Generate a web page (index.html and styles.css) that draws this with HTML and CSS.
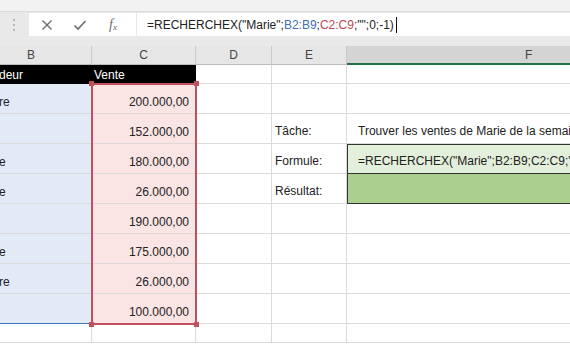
FILE: index.html
```html
<!DOCTYPE html>
<html lang="fr">
<head>
<meta charset="UTF-8">
<title>RECHERCHEX</title>
<link rel="stylesheet" href="styles.css">
</head>
<body>

<div class="edge"></div>

<div class="formula-bar">
  <div class="grip">
    <svg width="4" height="14" viewBox="0 0 4 14"><circle cx="2" cy="2" r="1" fill="#a6a6a6"/><circle cx="2" cy="7" r="1" fill="#a6a6a6"/><circle cx="2" cy="12" r="1" fill="#a6a6a6"/></svg>
  </div>
  <div class="buttons">
    <svg class="btn" width="12" height="12" viewBox="0 0 12 12"><path d="M1.5 1.5 L10.5 10.5 M10.5 1.5 L1.5 10.5" stroke="#6b6b6b" stroke-width="1.4" fill="none"/></svg>
    <svg class="btn" width="14" height="12" viewBox="0 0 14 12"><path d="M1.5 6.5 L5 10 L12.5 2" stroke="#6b6b6b" stroke-width="1.6" fill="none"/></svg>
    <span class="fx">f<sub>x</sub></span>
  </div>
  <div class="input">=RECHERCHEX("Marie";<span class="ref-b">B2:B9</span>;<span class="ref-c">C2:C9</span>;"";0;-1)<span class="caret"></span></div>
</div>

<div class="sheet">
  <!-- column headers -->
  <div class="col-head">B</div>
  <div class="col-head">C</div>
  <div class="col-head">D</div>
  <div class="col-head">E</div>
  <div class="col-head active">F</div>

  <!-- row 1 -->
  <div class="cell head-black cut">deur</div>
  <div class="cell head-black">Vente</div>
  <div class="cell"></div>
  <div class="cell"></div>
  <div class="cell"></div>

  <!-- row 2 -->
  <div class="cell b cut">re</div>
  <div class="cell c num">200.000,00</div>
  <div class="cell"></div>
  <div class="cell"></div>
  <div class="cell"></div>

  <!-- row 3 -->
  <div class="cell b cut"></div>
  <div class="cell c num">152.000,00</div>
  <div class="cell"></div>
  <div class="cell label">Tâche:</div>
  <div class="cell label task">Trouver les ventes de Marie de la semaine</div>

  <!-- row 4 -->
  <div class="cell b cut">e</div>
  <div class="cell c num">180.000,00</div>
  <div class="cell"></div>
  <div class="cell label">Formule:</div>
  <div class="cell label formula">=RECHERCHEX("Marie";B2:B9;C2:C9;"";0;-1)</div>

  <!-- row 5 -->
  <div class="cell b cut">e</div>
  <div class="cell c num">26.000,00</div>
  <div class="cell"></div>
  <div class="cell label">Résultat:</div>
  <div class="cell label result"></div>

  <!-- row 6 -->
  <div class="cell b cut"></div>
  <div class="cell c num">190.000,00</div>
  <div class="cell"></div>
  <div class="cell"></div>
  <div class="cell"></div>

  <!-- row 7 -->
  <div class="cell b cut">e</div>
  <div class="cell c num">175.000,00</div>
  <div class="cell"></div>
  <div class="cell"></div>
  <div class="cell"></div>

  <!-- row 8 -->
  <div class="cell b cut">re</div>
  <div class="cell c num">26.000,00</div>
  <div class="cell"></div>
  <div class="cell"></div>
  <div class="cell"></div>

  <!-- row 9 -->
  <div class="cell b last cut"></div>
  <div class="cell c num">100.000,00</div>
  <div class="cell"></div>
  <div class="cell"></div>
  <div class="cell"></div>

  <!-- row 10 -->
  <div class="cell"></div>
  <div class="cell"></div>
  <div class="cell"></div>
  <div class="cell"></div>
  <div class="cell"></div>

  <!-- outline of C2:C9 used by the formula -->
  <div class="range-c">
    <span class="handle tl"></span>
    <span class="handle tr"></span>
    <span class="handle bl"></span>
    <span class="handle br"></span>
  </div>
</div>

</body>
</html>
```

FILE: styles.css
```css
body {
  margin: 0;
  width: 570px;
  height: 350px;
  overflow: hidden;
  background: #ffffff;
  font-family: "Liberation Sans", Arial, sans-serif;
  font-size: 12px;
  color: #222;
}

.edge {
  height: 11px;
  background: #f2f2f2;
  border-bottom: 1px solid #dcdcdc;
}

.formula-bar {
  display: flex;
  align-items: flex-start;
  height: 34px;
  padding-top: 1px;
  box-sizing: border-box;
  background: #e9e9e9;
}
.grip {
  width: 29px;
  display: flex;
  justify-content: center;
  padding-top: 5px;
  box-sizing: border-box;
  padding-right: 1px;
}
.buttons {
  width: 107px;
  height: 23px;
  background: #fff;
  display: flex;
  align-items: center;
  box-sizing: border-box;
  padding-left: 12px;
}
.buttons .btn {
  margin-right: 20px;
}
.buttons .btn + .btn {
  margin-right: 22px;
}
.fx {
  font-family: "Liberation Serif", serif;
  font-style: italic;
  font-size: 14px;
  color: #6b6b6b;
  line-height: 1;
}
.fx sub {
  font-size: 9px;
  vertical-align: -1px;
}
.input {
  flex: 1;
  height: 23px;
  margin-left: 1px;
  background: #fff;
  padding-left: 10px;
  display: flex;
  align-items: center;
  white-space: nowrap;
  font-size: 12px;
  color: #222;
}
.ref-b { color: #3f6fb5; }
.ref-c { color: #c0474f; }
.caret {
  display: inline-block;
  width: 1px;
  height: 16px;
  background: #111;
  margin-left: 2px;
}

.sheet {
  position: relative;
  display: grid;
  grid-template-columns: 92px 104px 76px 75px 240px;
  grid-template-rows: 19px 19px repeat(8, 30px) 19px;
}

.col-head {
  background: #e6e6e6;
  border-right: 1px solid #c9c9c9;
  border-bottom: 1px solid #bdbdbd;
  box-sizing: border-box;
  display: flex;
  align-items: center;
  justify-content: center;
  color: #444;
  font-size: 12px;
}
.col-head:first-child {
  justify-content: flex-start;
  padding-left: 27px;
}
.col-head.active {
  background: #d4d4d4;
  border-bottom: 2px solid #217346;
  justify-content: flex-start;
  padding-left: 178px;
}

.cell {
  border-right: 1px solid #dadada;
  border-bottom: 1px solid #dadada;
  box-sizing: border-box;
  display: flex;
  align-items: flex-end;
  padding: 0 4px 4px;
  white-space: nowrap;
  overflow: hidden;
}
.cell.cut {
  padding-left: 0;
  text-indent: -1px;
}
.head-black {
  background: #000;
  color: #fff;
  border-color: #000;
  padding-bottom: 1px;
  padding-left: 2px;
}
.head-black.cut {
  padding-left: 0;
}
.b {
  background: #e2eaf6;
}
.b.last {
  border-bottom: 1px solid #4472c4;
}
.c {
  background: #fae4e4;
}
.num {
  justify-content: flex-end;
  padding-right: 6px;
}
.label {
  padding-left: 3px;
  padding-bottom: 5px;
  overflow: visible;
}
.label.task {
  padding-left: 11px;
}
.label.formula {
  background: #e2efda;
  border: 1px solid #333;
  padding-left: 10px;
  overflow: hidden;
}
.label.result {
  background: #a9d08e;
  border: 1px solid #333;
  border-top: none;
}

/* selection outline drawn over the C2:C9 cells */
.range-c {
  position: absolute;
  left: 91px;
  top: 37px;
  width: 106px;
  height: 242px;
  box-sizing: border-box;
  border: 2px solid #c0505b;
}
.handle {
  position: absolute;
  width: 5px;
  height: 5px;
  background: #c0505b;
}
.handle.tl { left: -4px; top: -4px; }
.handle.tr { right: -4px; top: -4px; }
.handle.bl { left: -4px; bottom: -4px; }
.handle.br { right: -4px; bottom: -4px; }
```
